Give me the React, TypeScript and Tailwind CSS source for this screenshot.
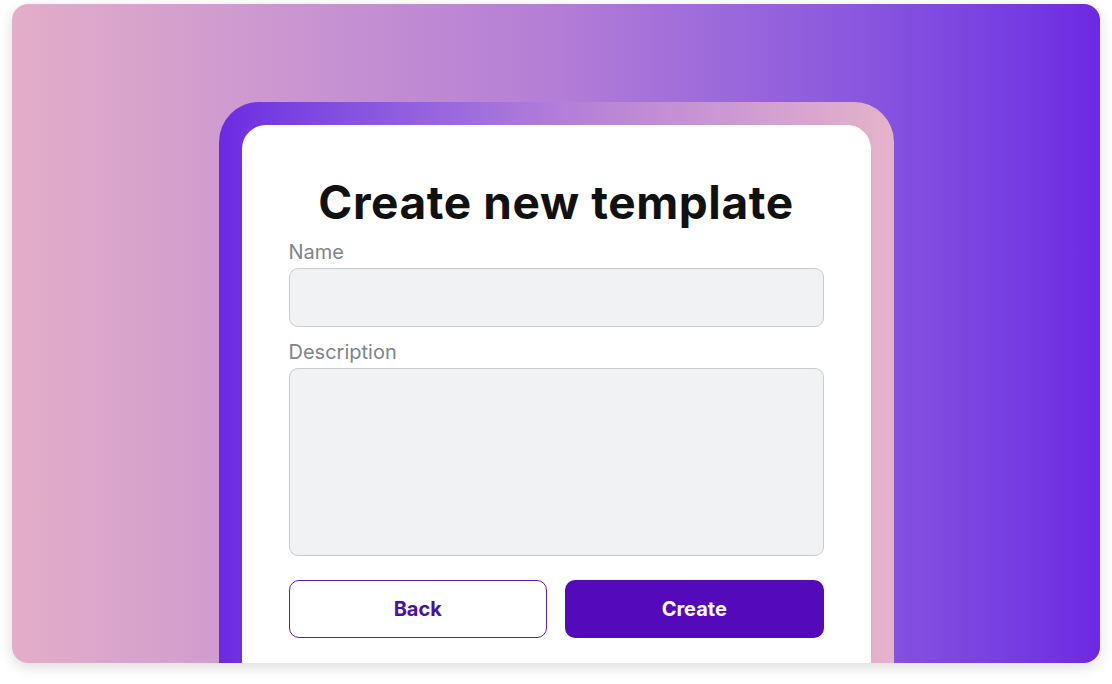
import React, { useState } from 'react';

export default function App() {
    const [name, setName] = useState('');
    const [description, setDescription] = useState('');

    return (
        <div className="w-[1112px] h-[684px] bg-white pt-[4px] px-[12px] font-['Inter',sans-serif]">
            <div className="w-[1088px] h-[659px] rounded-[16px] overflow-hidden bg-gradient-to-r from-[#e3aec8] via-[#b47dd6] to-[#6d28e3] shadow-[0_4px_14px_rgba(0,0,0,0.14)] flex justify-center pt-[98px]">
                <div className="w-[675px] h-full rounded-t-[40px] bg-gradient-to-r from-[#6d28e3] via-[#b27dd8] to-[#e5b3c9] px-[23px] pt-[23px]">
                    <div className="h-full rounded-t-[24px] bg-white px-[47px] pt-[54px] flex flex-col">
                        <h1 className="text-[46px] leading-none font-bold text-[#111111] text-center tracking-[0.6px]">
                            Create new template
                        </h1>
                        <label htmlFor="name" className="mt-[15px] text-[20px] leading-6 text-[#80848b]">Name</label>
                        <input
                            id="name"
                            type="text"
                            value={name}
                            onChange={(e) => setName(e.target.value)}
                            className="mt-[4px] h-[59px] w-full rounded-[9px] border-[1.5px] border-[#c9cbcd] bg-[#f1f2f4] px-4 text-[18px] outline-none"
                        />
                        <label htmlFor="description" className="mt-[13px] text-[20px] leading-6 text-[#80848b]">Description</label>
                        <textarea
                            id="description"
                            value={description}
                            onChange={(e) => setDescription(e.target.value)}
                            className="mt-[4px] h-[188px] w-full resize-none rounded-[9px] border-[1.5px] border-[#c9cbcd] bg-[#f1f2f4] p-4 text-[18px] outline-none"
                        />
                        <div className="mt-[24px] grid grid-cols-2 gap-[18px]">
                            <button className="h-[58px] rounded-[10px] border-[1.5px] border-[#5a1bb5] bg-white text-[20px] font-bold text-[#4a0fa6]">
                                Back
                            </button>
                            <button className="h-[58px] rounded-[10px] bg-[#5409bb] text-[20px] font-bold text-white">
                                Create
                            </button>
                        </div>
                    </div>
                </div>
            </div>
        </div>
    );
}
